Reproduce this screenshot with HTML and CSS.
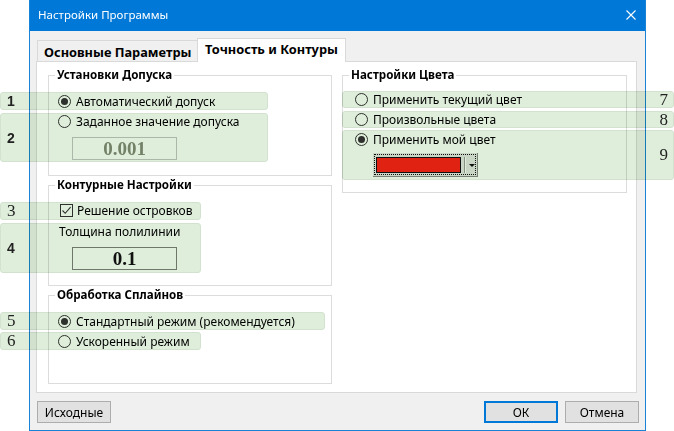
FILE: index.html
```html
<!DOCTYPE html>
<html lang="ru">
<head>
<meta charset="utf-8">
<title>Настройки Программы</title>
<link rel="stylesheet" href="styles.css">
</head>
<body>
<div class="window">
  <div class="titlebar">
    <span class="title">Настройки Программы</span>
    <svg class="close" width="10" height="10" viewBox="0 0 10 10"><path d="M0.5 0.5L9.5 9.5M9.5 0.5L0.5 9.5" stroke="#fff" stroke-width="1.1" fill="none"/></svg>
  </div>
  <div class="body">
    <div class="tabs">
      <div class="tab">Основные Параметры</div>
      <div class="tab active">Точность и Контуры</div>
    </div>
    <div class="panel">
      <div class="col">
        <fieldset class="group g1">
          <legend>Установки Допуска</legend>
          <div class="opt"><span class="radio checked"></span><span>Автоматический допуск</span></div>
          <div class="opt"><span class="radio"></span><span>Заданное значение допуска</span></div>
          <div class="edit disabled">0.001</div>
        </fieldset>
        <fieldset class="group g2">
          <legend>Контурные Настройки</legend>
          <div class="opt opt-check"><span class="check"><svg width="11" height="11" viewBox="0 0 11 11"><path d="M1.5 5.5L4.2 8.3L9.6 2.2" stroke="#333" stroke-width="1.1" fill="none"/></svg></span><span>Решение островков</span></div>
          <div class="label">Толщина полилинии</div>
          <div class="edit">0.1</div>
        </fieldset>
        <fieldset class="group g3">
          <legend>Обработка Сплайнов</legend>
          <div class="opt"><span class="radio checked"></span><span>Стандартный режим (рекомендуется)</span></div>
          <div class="opt"><span class="radio"></span><span>Ускоренный режим</span></div>
        </fieldset>
      </div>
      <div class="col">
        <fieldset class="group g4">
          <legend>Настройки Цвета</legend>
          <div class="opt"><span class="radio"></span><span>Применить текущий цвет</span></div>
          <div class="opt"><span class="radio"></span><span>Произвольные цвета</span></div>
          <div class="opt"><span class="radio checked"></span><span>Применить мой цвет</span></div>
          <div class="combo">
            <div class="combo-focus">
              <span class="swatch"></span>
              <span class="sep"></span>
              <span class="arrow"></span>
            </div>
          </div>
        </fieldset>
      </div>
    </div>
    <div class="buttons">
      <button class="btn">Исходные</button>
      <span class="spacer"></span>
      <button class="btn ok">ОК</button>
      <button class="btn">Отмена</button>
    </div>
  </div>
</div>

<div class="mark m1 left"><span class="num sans">1</span></div>
<div class="mark m2 left"><span class="num sans">2</span></div>
<div class="mark m3 left"><span class="num serif">3</span></div>
<div class="mark m4 left"><span class="num sans">4</span></div>
<div class="mark m5 left"><span class="num serif">5</span></div>
<div class="mark m6 left"><span class="num serif">6</span></div>
<div class="mark m7 right"><span class="num serif">7</span></div>
<div class="mark m8 right"><span class="num serif">8</span></div>
<div class="mark m9 right"><span class="num serif">9</span></div>
</body>
</html>
```

FILE: styles.css
```css
* { box-sizing: border-box; }
html, body {
  margin: 0;
  padding: 0;
  background: #ffffff;
  width: 674px;
  height: 431px;
  overflow: hidden;
  font-family: "Noto Sans", "Open Sans", sans-serif;
  font-size: 12px;
  color: #000;
}
.window {
  margin-left: 29px;
  width: 617px;
  height: 431px;
  border: 1px solid #1883d7;
  border-top: none;
  background: #f0f0f0;
  display: flex;
  flex-direction: column;
}
.titlebar {
  height: 31px;
  flex: none;
  background: #0078d7;
  display: flex;
  align-items: center;
  justify-content: space-between;
  padding: 0 9px 1px 8px;
  color: #fff;
}
.title { font-size: 11.5px; line-height: 16px; }
.close { display: block; }
.body {
  flex: 1;
  display: flex;
  flex-direction: column;
}
.tabs {
  display: flex;
  align-items: flex-end;
  height: 23px;
  margin: 7px 8px 0 6px;
  position: relative;
  z-index: 1;
}
.tab {
  height: 21px;
  width: 161px;
  margin-left: 1px;
  border: 1px solid #d9d9d9;
  border-bottom: none;
  background: #f0f0f0;
  font-weight: bold;
  font-size: 12.8px;
  line-height: 22px;
  padding-left: 6px;
  white-space: nowrap;
}
.tab.active {
  width: 149px;
  height: 24px;
  margin-left: -1px;
  margin-bottom: -1px;
  background: #fff;
  padding-left: 7px;
  line-height: 21px;
}
.panel {
  height: 332px;
  margin: 0 8px 0 6px;
  border: 1px solid #d9d9d9;
  background: #fff;
  padding: 6px 9px 0 11px;
  display: flex;
  gap: 10px;
}
.col {
  width: 284px;
  display: flex;
  flex-direction: column;
  gap: 2px;
}
.col + .col { width: 285px; }
.group {
  margin: 0;
  padding: 0;
  border: 1px solid #dcdcdc;
  min-width: 0;
}
.group legend {
  margin-left: -3px;
  padding: 0 2px;
  font-weight: bold;
  font-size: 11.6px;
  line-height: 14px;
}
.g4 legend { margin-left: -6px; }
.g1 { height: 108px; padding: 9px 0 0 9px; }
.g2 { height: 108px; padding: 8px 0 0 9px; }
.g3 { height: 96px; padding: 9px 0 0 9px; }
.g4 { height: 125px; padding: 7px 0 0 12px; }
.opt {
  display: flex;
  align-items: center;
  gap: 5px;
  height: 20px;
  white-space: nowrap;
}
.radio {
  width: 13px;
  height: 13px;
  border: 1px solid #333;
  border-radius: 50%;
  background: #fff;
  display: flex;
  align-items: center;
  justify-content: center;
  flex: none;
}
.radio.checked::after {
  content: "";
  width: 7px;
  height: 7px;
  border-radius: 50%;
  background: #333;
}
.opt-check { padding-left: 2px; gap: 4px; }
.check {
  width: 13px;
  height: 13px;
  border: 1px solid #333;
  background: #fff;
  display: flex;
  align-items: center;
  justify-content: center;
  flex: none;
}
.check svg { display: block; }
.label {
  height: 20px;
  line-height: 20px;
  margin-top: 2px;
  padding-left: 1px;
}
.edit {
  width: 105px;
  height: 23px;
  margin: 5px 0 0 14px;
  border: 1px solid #7f7f7f;
  background: #fff;
  font-family: "Liberation Serif", "Times New Roman", serif;
  font-weight: bold;
  font-size: 19px;
  line-height: 21px;
  text-align: center;
  color: #111;
}
.g1 .edit { margin-top: 6px; }
.edit.disabled {
  color: #848a78;
  border-color: #c4c4c4;
}
.combo {
  width: 105px;
  height: 24px;
  margin: 4px 0 0 18px;
  background: #e6e6e6;
  border-right: 1px solid #8a8a8a;
  border-bottom: 1px solid #8a8a8a;
  padding: 1px;
}
.combo-focus {
  width: 100%;
  height: 100%;
  border: 1px dotted #111;
  display: flex;
  align-items: center;
  padding-left: 1px;
}
.swatch {
  width: 87px;
  height: 16px;
  background: #ff2414;
  border: 1px solid #111;
}
.sep {
  width: 2px;
  height: 16px;
  margin-left: 3px;
  border-left: 1px solid #9a9a9a;
  border-right: 1px solid #fff;
}
.arrow {
  width: 0;
  height: 0;
  margin-left: 3px;
  margin-top: 2px;
  border-left: 3px solid transparent;
  border-right: 3px solid transparent;
  border-top: 3px solid #111;
}
.buttons {
  display: flex;
  gap: 7px;
  margin: 8px 6px 0 7px;
}
.spacer { flex: 1; }
.btn {
  width: 74px;
  height: 22px;
  margin: 0;
  padding: 0;
  border: 1px solid #adadad;
  background: #e1e1e1;
  font-family: "Noto Sans", "Open Sans", sans-serif;
  font-size: 12px;
  color: #000;
}
.btn.ok { border: 2px solid #0078d7; }

.mark {
  position: absolute;
  background: #dfeedb;
  border: 1px solid #d2e2ce;
  border-radius: 3px;
  mix-blend-mode: multiply;
  display: flex;
  align-items: center;
  color: #222;
}
.mark.left { left: 0; padding-left: 6px; }
.mark.right { left: 342px; width: 332px; justify-content: flex-end; padding-right: 5px; }
.num.sans { font-family: "Liberation Sans", Arial, sans-serif; font-weight: bold; font-size: 14px; }
.num.serif { font-family: "Liberation Serif", "Times New Roman", serif; font-size: 17px; }
.m1 { top: 92px; height: 18px; width: 268px; }
.m2 { top: 113px; height: 49px; width: 268px; }
.m3 { top: 202px; height: 18px; width: 201px; }
.m4 { top: 223px; height: 50px; width: 201px; }
.m5 { top: 312px; height: 18px; width: 325px; }
.m6 { top: 332px; height: 18px; width: 201px; }
.m7 { top: 91px; height: 17px; }
.m8 { top: 111px; height: 17px; }
.m9 { top: 130px; height: 50px; }
```
